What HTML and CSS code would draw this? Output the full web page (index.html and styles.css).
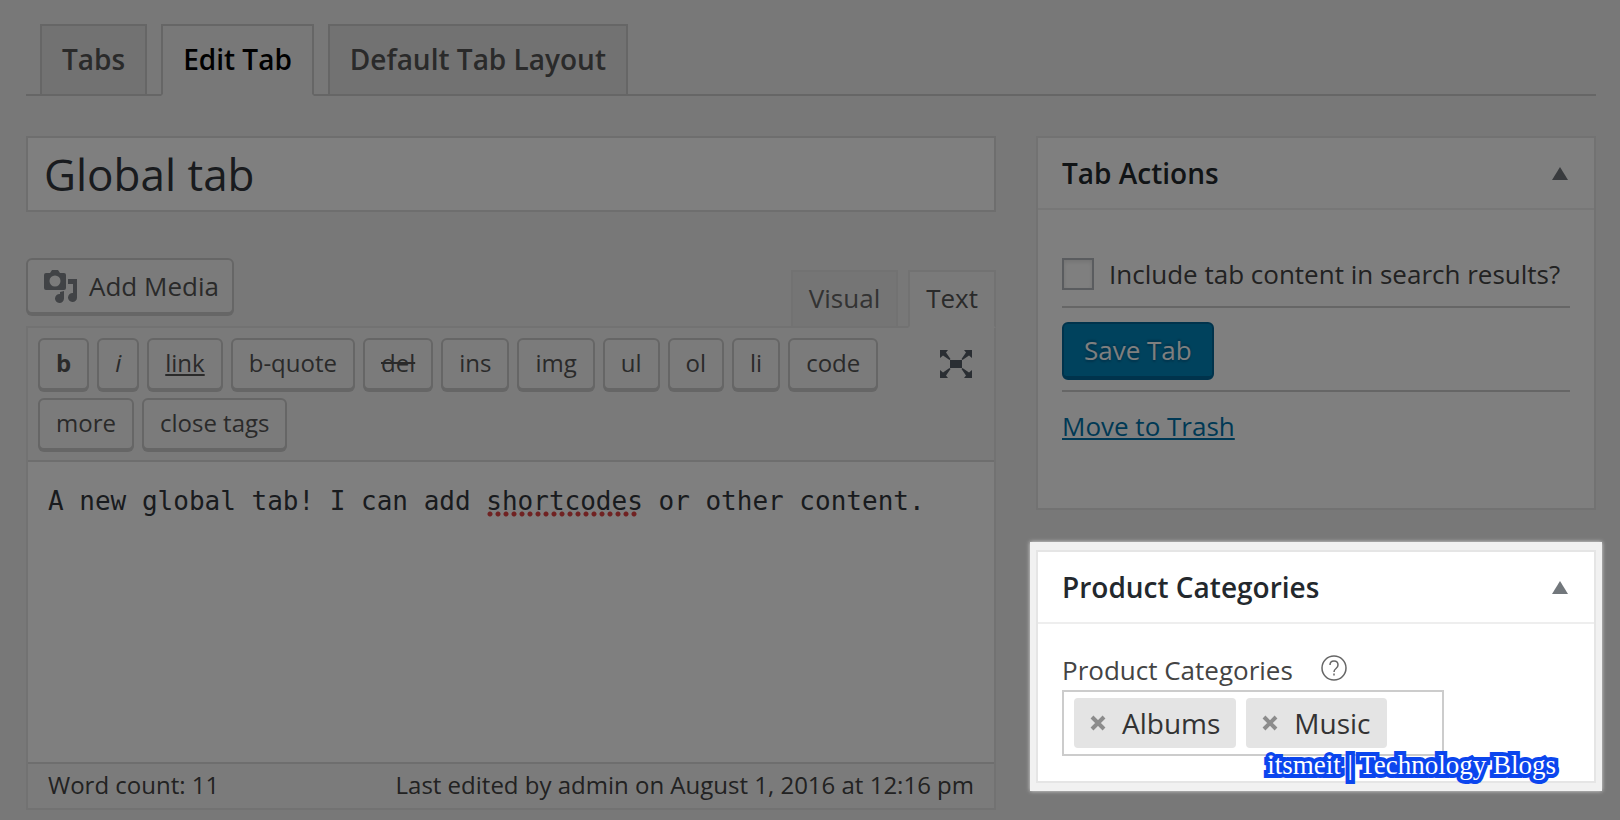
FILE: index.html
```html
<!DOCTYPE html>
<html lang="en">
<head>
<meta charset="utf-8">
<title>Edit Tab</title>
<link rel="stylesheet" href="styles.css">
</head>
<body>
<nav class="nav-tabs">
  <a class="nav-tab" href="#tabs">Tabs</a>
  <a class="nav-tab nav-tab-active" href="#edit" aria-current="page">Edit Tab</a>
  <a class="nav-tab" href="#layout">Default Tab Layout</a>
</nav>
<main class="columns">
  <section class="main-column">
    <input class="title-input" type="text" aria-label="Tab title" value="Global tab">
    <div class="editor-head">
      <button class="button add-media" type="button">
        <svg class="media-icon" viewBox="0 0 33 33" aria-hidden="true">
          <path fill-rule="evenodd" d="M2 3h4l2-3h6l2 3h4q2 0 2 2v13q0 2-2 2H2q-2 0-2-2V5q0-2 2-2zM11 5.500a5.500 5.500 0 1 0 0 11a5.500 5.500 0 1 0 0-11z"/>
          <path d="M24 9h9v18.500a4.500 4.500 0 1 1-4-4.400V14h-5z"/>
          <path d="M16 22l4-1v7.500a4.500 4.500 0 1 1-4-4.500z"/>
        </svg>
        Add Media
      </button>
      <div class="mode-tabs">
        <button class="mode-tab" type="button">Visual</button>
        <button class="mode-tab mode-tab-active" type="button">Text</button>
      </div>
    </div>
    <div class="editor">
      <div class="toolbar">
        <div class="quicktags">
          <button class="button tag tag-bold" type="button">b</button>
          <button class="button tag tag-italic" type="button">i</button>
          <button class="button tag tag-link" type="button">link</button>
          <button class="button tag" type="button">b-quote</button>
          <button class="button tag tag-del" type="button">del</button>
          <button class="button tag" type="button">ins</button>
          <button class="button tag" type="button">img</button>
          <button class="button tag" type="button">ul</button>
          <button class="button tag" type="button">ol</button>
          <button class="button tag" type="button">li</button>
          <button class="button tag" type="button">code</button>
          <button class="button tag" type="button">more</button>
          <button class="button tag" type="button">close tags</button>
        </div>
        <button class="fullscreen" type="button" aria-label="Distraction-free writing mode">
          <svg viewBox="0 0 32 28" width="32" height="28" aria-hidden="true">
            <path d="M10 10h12v8H10z"/>
            <path id="arrow" d="M0 0h8L6 2.500L10.500 9L9.500 10L3 5.500L0 8z"/>
            <use href="#arrow" transform="matrix(-1 0 0 1 32 0)"/>
            <use href="#arrow" transform="matrix(1 0 0 -1 0 28)"/>
            <use href="#arrow" transform="matrix(-1 0 0 -1 32 28)"/>
          </svg>
        </button>
      </div>
      <div class="content-wrap">
        <textarea class="content" aria-label="Tab content" spellcheck="false">A new global tab! I can add shortcodes or other content.</textarea>
        <span class="misspelling" aria-hidden="true"></span>
      </div>
      <div class="status">
        <span>Word count: 11</span>
        <span>Last edited by admin on August 1, 2016 at 12:16 pm</span>
      </div>
    </div>
  </section>
  <aside class="side-column">
    <section class="panel">
      <header class="panel-head">
        <h2 class="panel-title">Tab Actions</h2>
        <button class="toggle" type="button" aria-label="Toggle Tab Actions"></button>
      </header>
      <div class="actions">
        <div class="check-row">
          <input class="checkbox" type="checkbox" id="searchable">
          <label for="searchable">Include tab content in search results?</label>
        </div>
        <div class="save-row"><button class="save" type="button">Save Tab</button></div>
        <a class="trash" href="#trash">Move to Trash</a>
      </div>
    </section>
    <div class="spotlight">
      <section class="panel">
        <header class="panel-head">
          <h2 class="panel-title">Product Categories</h2>
          <button class="toggle" type="button" aria-label="Toggle Product Categories"></button>
        </header>
        <div class="categories">
          <div class="label-row">
            <label for="category-search">Product Categories</label>
            <svg class="help" viewBox="0 0 26 26" role="img" aria-label="Help">
              <circle cx="13" cy="13" r="12"/>
              <path d="M9 10q0-4 4-4t4 4q0 2-2 3.500t-2 3.500"/>
              <path d="M13 18.500v2"/>
            </svg>
          </div>
          <div class="multi-select">
            <span class="chip"><button class="chip-remove" type="button" aria-label="Remove Albums"><svg viewBox="0 0 16 16" width="16" height="16"><path d="M2 2l12 12M14 2L2 14"/></svg></button>Albums</span>
            <span class="chip"><button class="chip-remove" type="button" aria-label="Remove Music"><svg viewBox="0 0 16 16" width="16" height="16"><path d="M2 2l12 12M14 2L2 14"/></svg></button>Music</span>
            <input class="chip-search" type="text" id="category-search">
          </div>
        </div>
      </section>
      <span class="watermark">itsmeit | Technology Blogs</span>
    </div>
  </aside>
</main>
</body>
</html>
```
FILE: styles.css
```css
* { box-sizing: border-box; }

body {
  margin: 0;
  min-height: 100vh;
  overflow: hidden;
  background: #f1f1f1;
  color: #444;
  font: 26px/36px "Open Sans", sans-serif;
}

button, input, textarea { font: inherit; color: inherit; margin: 0; }
button { cursor: pointer; white-space: nowrap; }

.nav-tabs {
  display: flex;
  gap: 14px;
  margin: 24px 24px 0 26px;
  padding-left: 14px;
  border-bottom: 2px solid #ccc;
}
.nav-tab {
  margin-bottom: -2px;
  padding: 9px 20px 11px;
  border: 2px solid #ccc;
  background: #e4e4e4;
  color: #555;
  font-size: 28px;
  font-weight: 600;
  line-height: 48px;
  text-decoration: none;
}
.nav-tab-active {
  border-bottom-color: #f1f1f1;
  background: #f1f1f1;
  color: #000;
}

.columns {
  display: grid;
  grid-template-columns: minmax(0, 1fr) 560px;
  gap: 40px;
  margin: 40px 24px 0 26px;
}

.title-input {
  display: block;
  width: 100%;
  height: 76px;
  padding: 4px 16px;
  border: 2px solid #ddd;
  background: #fff;
  color: #32373c;
  font-size: 44px;
}

.editor-head {
  display: flex;
  justify-content: space-between;
  align-items: flex-start;
  margin-top: 46px;
}
.button {
  border: 2px solid #ccc;
  border-radius: 6px;
  background: #f7f7f7;
  box-shadow: 0 2px 0 #ccc;
  color: #555;
}
.add-media {
  display: flex;
  align-items: center;
  gap: 12px;
  height: 56px;
  padding: 0 13px 0 16px;
}
.media-icon { width: 33px; height: 33px; fill: #82878c; }
.mode-tabs {
  position: relative;
  display: flex;
  gap: 10px;
  margin: 12px 0 -2px;
}
.mode-tab {
  height: 58px;
  padding: 0 16px 2px;
  border: 2px solid #e5e5e5;
  background: #ebebeb;
  color: #666;
}
.mode-tab-active {
  border-bottom-color: #f5f5f5;
  background: #f5f5f5;
  color: #555;
}

.editor { border: 2px solid #e5e5e5; }
.toolbar {
  display: flex;
  justify-content: space-between;
  align-items: flex-start;
  padding: 10px 22px 10px 10px;
  border-bottom: 2px solid #ddd;
  background: #f5f5f5;
}
.quicktags { display: flex; flex-wrap: wrap; gap: 8px; width: 860px; }
.tag {
  height: 52px;
  padding: 0 16px 2px;
  font-size: 24px;
}
.tag-bold { font-weight: 700; }
.tag-italic { font-style: italic; }
.tag-link { text-decoration: underline; }
.tag-del { text-decoration: line-through; }
.fullscreen {
  display: flex;
  margin-top: 12px;
  padding: 0;
  border: 0;
  background: none;
  fill: #555d66;
}

.content-wrap {
  position: relative;
  font: 26px/38px "DejaVu Sans Mono", monospace;
}
.content {
  display: block;
  width: 100%;
  height: 300px;
  padding: 20px;
  border: 0;
  background: #fff;
  color: #32373c;
  resize: none;
}
.misspelling {
  position: absolute;
  top: 49px;
  left: calc(20px + 28ch);
  width: 152px;
  height: 6px;
  background: radial-gradient(circle at 4px 3px, #e04545 2px, transparent 3px) 0 0 / 8px 6px repeat-x;
}
.status {
  display: flex;
  justify-content: space-between;
  padding: 3px 20px 5px;
  border-top: 2px solid #ddd;
  background: #f7f7f7;
  color: #444;
  font-size: 24px;
}

.panel { border: 2px solid #e5e5e5; background: #fff; }
.panel-head {
  display: flex;
  align-items: center;
  justify-content: space-between;
  height: 72px;
  padding: 0 26px 0 24px;
  border-bottom: 2px solid #eee;
}
.panel-title {
  margin: 0;
  color: #23282d;
  font-size: 28px;
  font-weight: 600;
}
.toggle {
  padding: 0;
  border: solid transparent;
  border-width: 0 8px 13px;
  border-bottom-color: #72777c;
  background: none;
}
.actions { padding: 41px 24px 64px; }
.check-row {
  display: flex;
  align-items: center;
  gap: 15px;
  padding: 5px 0 14px;
  border-bottom: 2px solid #ccc;
  white-space: nowrap;
}
.checkbox {
  flex: none;
  width: 32px;
  height: 32px;
  border: 2px solid #b4b9be;
  background: #fff;
  box-shadow: inset 0 2px 4px rgba(0, 0, 0, .1);
  appearance: none;
}
.save-row {
  padding: 14px 0 10px;
  border-bottom: 2px solid #ccc;
}
.save {
  display: block;
  height: 58px;
  padding: 0 20px;
  border: 2px solid #006799;
  border-bottom-width: 4px;
  border-radius: 6px;
  background: #0085ba;
  color: #fff;
  text-shadow: 0 -2px 2px #006799, 0 2px 2px #006799;
}
.trash {
  display: inline-block;
  margin-top: 16px;
  color: #0073aa;
}

/* The shade around the spotlight dims the rest of the page. */
.spotlight {
  position: relative;
  z-index: 1;
  margin: 32px -6px 0;
  padding: 8px 6px;
  background: #f1f1f1;
  box-shadow: 0 0 4px #ddd, 0 0 0 3000px rgba(0, 0, 0, .5);
}
.categories { padding: 28px 24px 25px; }
.label-row {
  display: flex;
  align-items: center;
  gap: 28px;
  margin-bottom: 2px;
}
.help {
  width: 26px;
  height: 26px;
  margin-bottom: 4px;
  fill: none;
  stroke: #666;
  stroke-width: 1.5;
}
.multi-select {
  display: flex;
  gap: 10px;
  width: 382px;
  padding: 6px 10px;
  border: 2px solid #ccc;
}
.chip {
  display: flex;
  align-items: center;
  gap: 16px;
  height: 50px;
  padding: 0 16px;
  border-radius: 4px;
  background: #e4e4e4;
  color: #333;
  font-size: 28px;
}
.chip-remove {
  display: flex;
  padding: 0;
  border: 0;
  background: none;
  stroke: #8c8c8c;
  stroke-width: 4;
}
.chip-search {
  flex: 1;
  min-width: 0;
  width: 0;
  padding: 0;
  border: 0;
  outline: 0;
  background: none;
}
.watermark {
  position: absolute;
  right: 46px;
  bottom: 8px;
  color: #fff;
  font: 27px/36px "Liberation Serif", serif;
  white-space: nowrap;
  paint-order: stroke fill;
  -webkit-text-stroke: 8px #0c46ee;
  stroke-linejoin: round;
  text-shadow: 0 0 3px #0c46ee;
}
```
